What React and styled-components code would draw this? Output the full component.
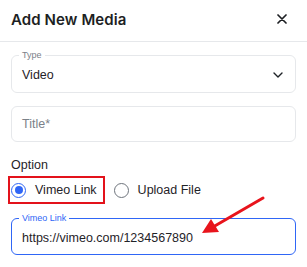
import React from "react";
import styled, { createGlobalStyle } from "styled-components";

const GlobalStyle = createGlobalStyle`
  html, body {
    margin: 0;
    padding: 0;
    background: #ffffff;
  }
  body {
    font-family: "Liberation Sans", Arial, sans-serif;
    color: #1f2328;
  }
`;

const Modal = styled.div`
  position: relative;
  width: 307px;
  height: 267px;
  background: #fff;
  overflow: hidden;
`;

const Header = styled.div`
  height: 41px;
  padding: 0 19px 0 11px;
  display: flex;
  align-items: center;
  justify-content: space-between;
  border-bottom: 1.5px solid #e6e8eb;
`;

const Heading = styled.h2`
  margin: 0;
  font-family: Inter, "Open Sans", sans-serif;
  font-size: 15px;
  font-weight: 600;
  letter-spacing: 0.1px;
  color: #1d1f23;
  padding-bottom: 3px;
`;

const CloseButton = styled.button`
  border: 0;
  background: none;
  padding: 0;
  width: 12px;
  height: 12px;
  display: flex;
  align-items: center;
  justify-content: center;
  cursor: pointer;
  margin-bottom: 3px;
`;

const Body = styled.div`
  padding: 8px 11px 0 11px;
  display: flex;
  flex-direction: column;
`;

const Outlined = styled.fieldset`
  margin: 0;
  padding: 0 10px 0 10px;
  border: ${({ $active }) => ($active ? "1.5px solid #2f66f6" : "1px solid #e6e8eb")};
  border-radius: 6px;
  min-width: 0;
`;

const Legend = styled.legend`
  padding: 0 3px;
  margin-left: -3px;
  font-size: 9px;
  line-height: 10px;
  color: ${({ $active }) => ($active ? "#2f66f6" : "#7b8189")};
`;

const FieldRow = styled.div`
  height: 30px;
  display: flex;
  align-items: center;
  justify-content: space-between;
  font-size: 12.5px;
  color: #1f2328;
  padding-bottom: ${({ $pb }) => $pb || 0}px;
`;

const TextBox = styled.div`
  margin-top: 13px;
  height: 34px;
  border: 1px solid #e6e8eb;
  border-radius: 6px;
  padding: 0 10px;
  display: flex;
  align-items: center;
  font-size: 12.5px;
  color: #7b8189;
`;

const SectionLabel = styled.div`
  margin-top: 15px;
  font-size: 12.5px;
  line-height: 16px;
  color: #1f2328;
`;

const RadioGroup = styled.div`
  margin-top: 3px;
  margin-left: -3px;
  display: flex;
  align-items: center;
  gap: 6px;
`;

const RadioOption = styled.label`
  display: flex;
  align-items: center;
  gap: 9px;
  height: 24px;
  padding: 0 6px 0 1px;
  border: 2px solid ${({ $marked }) => ($marked ? "#e3121b" : "transparent")};
  font-size: 12.5px;
  color: #1f2328;
`;

const RadioDot = styled.span`
  width: 15px;
  height: 15px;
  box-sizing: border-box;
  border-radius: 50%;
  border: 1.5px solid ${({ $checked }) => ($checked ? "#2f66f6" : "#6e747c")};
  display: flex;
  align-items: center;
  justify-content: center;

  &::after {
    content: "";
    width: 8px;
    height: 8px;
    border-radius: 50%;
    background: ${({ $checked }) => ($checked ? "#2f66f6" : "transparent")};
  }
`;

const LinkField = styled.div`
  margin-top: 9px;
`;

const Arrow = styled.svg`
  position: absolute;
  left: 0;
  top: 0;
  pointer-events: none;
`;

const App = () => {
  return (
    <>
      <GlobalStyle />
      <Modal>
        <Header>
          <Heading>Add New Media</Heading>
          <CloseButton aria-label="Close">
            <svg width="10" height="10" viewBox="0 0 10 10">
              <path d="M1 1 L9 9 M9 1 L1 9" stroke="#1d1f23" strokeWidth="1.7" strokeLinecap="round" />
            </svg>
          </CloseButton>
        </Header>
        <Body>
          <Outlined>
            <Legend>Type</Legend>
            <FieldRow $pb={2}>
              <span>Video</span>
              <svg width="10" height="6" viewBox="0 0 10 6" style={{ marginRight: 2 }}>
                <path d="M1 1 L5 5 L9 1" fill="none" stroke="#1f2328" strokeWidth="1.4" strokeLinecap="round" strokeLinejoin="round" />
              </svg>
            </FieldRow>
          </Outlined>

          <TextBox>Title*</TextBox>

          <SectionLabel>Option</SectionLabel>
          <RadioGroup>
            <RadioOption $marked>
              <RadioDot $checked />
              Vimeo Link
            </RadioOption>
            <RadioOption>
              <RadioDot />
              Upload File
            </RadioOption>
          </RadioGroup>

          <LinkField>
            <Outlined $active>
              <Legend $active>Vimeo Link</Legend>
              <FieldRow $pb={1}>https://vimeo.com/1234567890</FieldRow>
            </Outlined>
          </LinkField>
        </Body>
        <Arrow width="307" height="267" viewBox="0 0 307 267">
          <line x1="263" y1="198" x2="213" y2="227" stroke="#e8141c" strokeWidth="3" strokeLinecap="round" />
          <polygon points="202,233 219,232 211,219" fill="#e8141c" />
        </Arrow>
      </Modal>
    </>
  );
};

export default App;
